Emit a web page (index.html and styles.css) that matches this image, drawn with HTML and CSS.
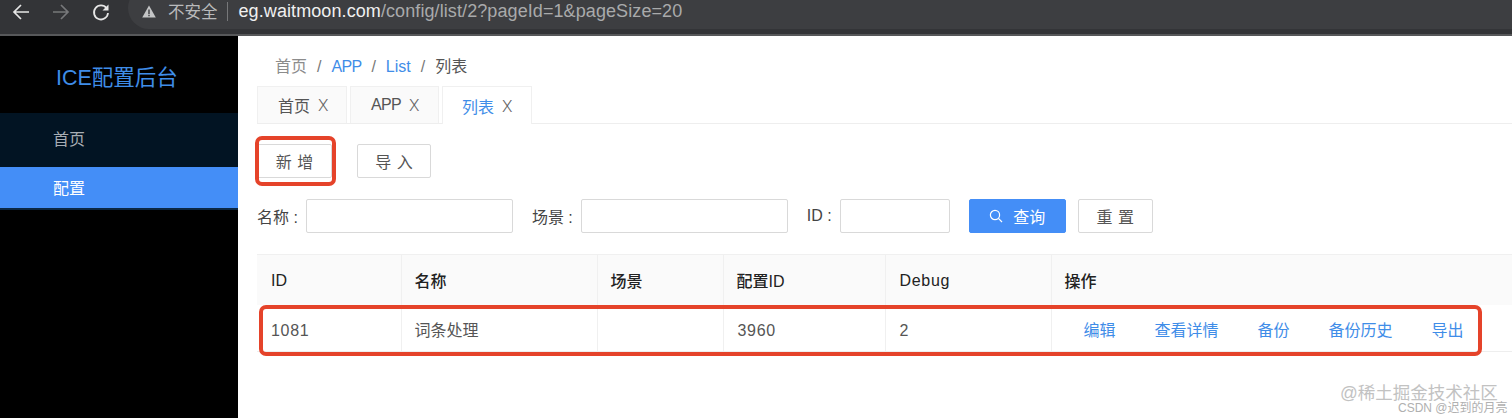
FILE: index.html
```html
<!DOCTYPE html>
<html lang="zh-CN">
<head>
<meta charset="utf-8">
<title>ICE配置后台</title>
<link rel="stylesheet" href="styles.css">
</head>
<body>
<header class="chrome">
  <svg class="nav-icon" width="20" height="20" viewBox="0 0 20 20"><path d="M18 10H3M10 3l-7 7 7 7" fill="none" stroke="#e6e6e6" stroke-width="1.7"/></svg>
  <svg class="nav-icon" width="20" height="20" viewBox="0 0 20 20"><path d="M2 10h15M10 3l7 7-7 7" fill="none" stroke="#77787a" stroke-width="1.7"/></svg>
  <svg class="nav-icon" width="20" height="20" viewBox="0 0 20 20"><path d="M15.6 6.2A7 7 0 1 0 17 11" fill="none" stroke="#e6e6e6" stroke-width="1.8"/><path d="M17.5 2.5v6h-6z" fill="#e6e6e6"/></svg>
  <div class="omnibox">
    <svg width="14" height="13" viewBox="0 0 14 13"><path d="M7 0.5L13.8 12.5H0.2z" fill="#c4c5c6"/><path d="M6.3 4.5h1.4v4.4H6.3zM6.3 9.8h1.4v1.4H6.3z" fill="#3c3d40"/></svg>
    <span class="insecure">不安全</span>
    <span class="omni-sep"></span>
    <span class="url"><b>eg.waitmoon.com</b>/config/list/2?pageId=1&amp;pageSize=20</span>
  </div>
</header>
<div class="app">
  <aside class="sidebar">
    <div class="logo">ICE配置后台</div>
    <nav class="menu">
      <a class="menu-item">首页</a>
      <a class="menu-item active">配置</a>
    </nav>
  </aside>
  <main class="content">
    <div class="breadcrumb">
      <span>首页</span><i>/</i><a class="narrow">APP</a><i>/</i><a>List</a><i>/</i><span class="current">列表</span>
    </div>
    <div class="tabs">
      <div class="tab">首页<span class="close">X</span></div>
      <div class="tab"><span class="narrow">APP</span><span class="close">X</span></div>
      <div class="tab active">列表<span class="close">X</span></div>
    </div>
    <div class="actions">
      <button class="btn btn-add">新 增</button>
      <button class="btn btn-import">导 入</button>
    </div>
    <form class="filters">
      <label class="label">名称 :</label><input class="input input-name">
      <label class="label">场景 :</label><input class="input input-name">
      <label class="label">ID :</label><input class="input input-id">
      <button type="button" class="btn btn-primary">
        <svg width="14" height="14" viewBox="0 0 14 14"><circle cx="6" cy="6" r="4.6" fill="none" stroke="#fff" stroke-width="1.2"/><path d="M9.4 9.4L13 13" stroke="#fff" stroke-width="1.2"/></svg>
        查询
      </button>
      <button type="button" class="btn btn-reset">重 置</button>
    </form>
    <table class="table">
      <colgroup><col class="c1"><col class="c2"><col class="c3"><col class="c4"><col class="c5"><col></colgroup>
      <thead>
        <tr><th class="latin">ID</th><th>名称</th><th>场景</th><th>配置ID</th><th class="latin wide">Debug</th><th>操作</th></tr>
      </thead>
      <tbody>
        <tr>
          <td class="latin wide">1081</td><td>词条处理</td><td></td><td class="latin wide">3960</td><td class="latin">2</td>
          <td><div class="ops"><a>编辑</a><a>查看详情</a><a>备份</a><a>备份历史</a><a>导出</a></div></td>
        </tr>
      </tbody>
    </table>
  </main>
</div>
<div class="mark mark-add"></div>
<div class="mark mark-row"></div>
<div class="wm wm-1">@稀土掘金技术社区</div>
<div class="wm wm-2">CSDN @迟到的月亮</div>
</body>
</html>
```

FILE: styles.css
```css
* { box-sizing: border-box; }
html, body { margin: 0; height: 100%; overflow: hidden; }
body {
  position: relative;
  font-family: "Liberation Sans", "Noto Sans CJK SC", sans-serif;
  font-size: 16px;
  color: #555;
  background: #fff;
}
.chrome {
  height: 36px;
  background: #333437;
  border-bottom: 2px solid #57585a;
  display: flex;
  align-items: center;
  padding-left: 11px;
  gap: 20px;
  overflow: hidden;
}
.nav-icon { flex: none; margin-top: -10px; }
.omnibox {
  margin: -18px 0 0 -3px;
  flex: 1;
  height: 42px;
  border-radius: 21px 0 0 21px;
  background: #3d3e41;
  display: flex;
  align-items: center;
  padding: 6px 0 0 14px;
  gap: 8px;
}
.insecure { color: #b9babb; font-size: 16.5px; margin-left: 4px; }
.omni-sep { width: 1px; height: 19px; background: #77787a; margin: 0 3px 0 1px; }
.url { color: #a9aaab; font-size: 18px; letter-spacing: 0.09px; }
.url b { color: #f0f0f0; font-weight: 400; }
.app { display: flex; height: 382px; }
.sidebar { width: 238px; flex: none; background: #000; }
.logo {
  height: 77px;
  padding: 29px 0 0 56px;
  color: #3f8de8;
  font-size: 21.5px;
  line-height: 26px;
  white-space: nowrap;
}
.menu { background: #021423; border-bottom: 2px solid #0b2744; }
.menu-item {
  display: flex;
  align-items: center;
  padding-left: 53px;
  color: #a7adb3;
}
.menu-item:first-child { height: 54px; padding-bottom: 4px; }
.menu-item.active { height: 41px; padding-bottom: 2px; background: #448ef7; color: #fff; }
.content { flex: 1; min-width: 0; padding: 21px 0 0 19px; }
.breadcrumb {
  height: 20px;
  line-height: 20px;
  padding-left: 18px;
  color: #8c8c8c;
  display: flex;
}
.breadcrumb i { font-style: normal; margin: 0 10px; color: #777; }
.breadcrumb a { color: #3f8de8; }
.breadcrumb .current { color: #555; }
.narrow { letter-spacing: -0.7px; }
.tabs {
  margin-top: 9px;
  height: 38px;
  display: flex;
  gap: 3px;
  border-bottom: 1px solid #eee;
}
.tab {
  height: 37px;
  width: 90px;
  padding-left: 20px;
  background: #fafafa;
  border: 1px solid #f0f0f0;
  border-bottom: 0;
  display: flex;
  align-items: center;
  color: #555;
}
.tab:nth-child(2) { width: 89px; }
.tab.active {
  height: 38px;
  background: #fff;
  color: #3f8de8;
  padding-left: 19px;
  margin-bottom: -1px;
}
.close {
  font-family: Roboto, sans-serif;
  font-weight: 300;
  font-size: 17px;
  color: #666;
  margin-left: 8px;
}
.actions { display: flex; margin-top: 20px; height: 34px; }
.btn {
  height: 34px;
  background: #fff;
  border: 1px solid #d9d9d9;
  border-radius: 2px;
  font: inherit;
  color: #555;
  padding: 0;
  flex: none;
  word-spacing: 1px;
}
.btn-add { width: 75px; }
.btn-import { width: 74px; margin-left: 25px; }
.filters { display: flex; align-items: center; margin-top: 21px; height: 34px; }
.label { color: #444; flex: none; }
.input {
  height: 34px;
  border: 1px solid #d9d9d9;
  border-radius: 2px;
  background: #fff;
  margin-left: 8px;
  flex: none;
}
.input-name { width: 207px; margin-right: 19px; }
.input-id { width: 110px; margin-right: 19px; }
.btn-primary {
  width: 97px;
  background: #448ef7;
  border-color: #448ef7;
  color: #fff;
  display: flex;
  align-items: center;
  justify-content: center;
  gap: 10px;
}
.btn-reset { width: 75px; margin-left: 12px; }
.table {
  width: 100%;
  margin-top: 21px;
  border-collapse: collapse;
  table-layout: fixed;
}
.c1 { width: 144px; }
.c2 { width: 196px; }
.c3 { width: 126px; }
.c4 { width: 162px; }
.c5 { width: 166px; }
.table th {
  height: 50px;
  background: #fafafa;
  border-top: 1px solid #f0f0f0;
  border-right: 1px solid #f0f0f0;
  text-align: left;
  padding: 0 0 0 13px;
  font-size: 16px;
  font-weight: 500;
  color: #222;
}
.table th:last-child, .table td:last-child { border-right: 0; }
.table td {
  height: 47px;
  border-right: 1px solid #f0f0f0;
  border-bottom: 1px solid #eee;
  padding: 3px 0 0 13px;
  color: #555;
}
.table td:last-child { padding-left: 32px; }
.table th.latin { padding-top: 3px; padding-left: 14px; }
.table td.latin { padding-top: 6px; padding-left: 14px; }
.table .wide { letter-spacing: 0.7px; }
.ops { display: flex; gap: 39px; }
.ops a { color: #3f8de8; }
.mark {
  position: absolute;
  border: 4px solid #e5432a;
  pointer-events: none;
}
.mark-add { left: 255px; top: 136px; width: 81px; height: 50px; border-radius: 7px; }
.mark-row { left: 259px; top: 305px; width: 1223px; height: 51px; border-radius: 7px; }
.wm { position: absolute; white-space: nowrap; }
.wm-1 { left: 1340px; top: 379px; font-size: 17.5px; color: #c2c2c2; }
.wm-2 { left: 1398px; top: 398px; font-size: 12px; color: #b0b0b0; }
```
